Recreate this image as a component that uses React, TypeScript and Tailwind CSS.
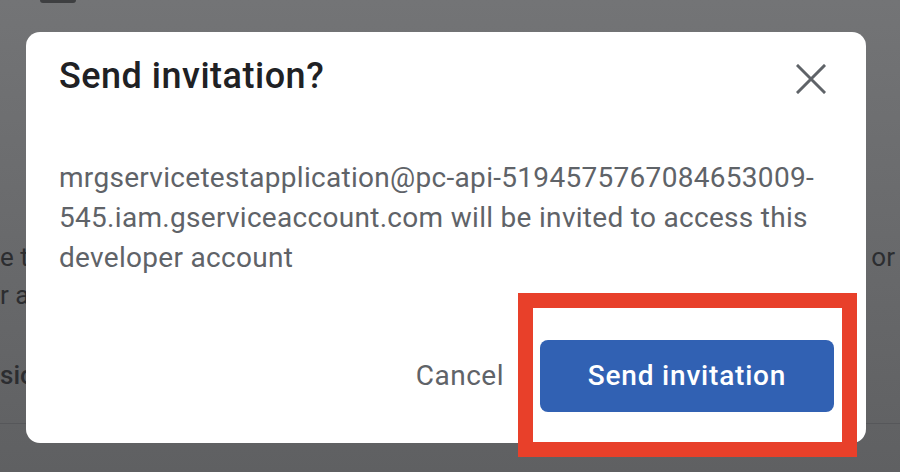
import React from 'react';

const font = { fontFamily: 'Roboto, "Noto Sans", Arial, sans-serif' };

export default function App() {
  return (
    <div
      className="relative w-[900px] h-[472px] overflow-hidden bg-gradient-to-b from-[#737476] to-[#5f6062]"
      style={font}
    >
      {/* page behind the modal */}
      <div className="flex flex-col h-full text-[26px] leading-[32px] text-[#2c2d30]">
        <div className="ml-[40px] w-[36px] h-[3px] rounded-b-[3px] bg-[#3e3f41]" />
        <div className="flex justify-between pt-[238px]">
          <span>e the</span>
          <span className="mr-[5px]">or</span>
        </div>
        <div className="mt-[6px]">r a</div>
        <div className="mt-[48px] font-medium">sion</div>
        <div className="mt-[32px] h-px bg-[#56575a]" />
      </div>

      {/* dialog */}
      <div className="absolute left-[26px] top-[32px] w-[840px] h-[411px] rounded-[14px] bg-white flex flex-col">
        <div className="flex items-start justify-between pl-[33px] pr-[40px] pt-[22px]">
          <h2 className="text-[36px] leading-[44px] font-medium tracking-[0.5px] text-[#202124]">Send invitation?</h2>
          <button className="mt-[10px] text-[#5f6368]">
            <svg width="30" height="30" viewBox="0 0 30 30">
              <path d="M2 2 L28 28 M28 2 L2 28" stroke="currentColor" strokeWidth="3" strokeLinecap="square" />
            </svg>
          </button>
        </div>
        <p className="pl-[33px] pr-[30px] mt-[60px] text-[28px] leading-[40px] tracking-[0.3px] text-[#5f6368] whitespace-nowrap">
          mrgservicetestapplication@pc-api-5194575767084653009-
          <br />
          545.iam.gserviceaccount.com will be invited to access this
          <br />
          developer account
        </p>
        <div className="mt-auto flex items-center justify-end gap-[36px] pr-[32px] pb-[31px]">
          <button className="text-[28px] tracking-[0.5px] text-[#5f6368]">Cancel</button>
          <button className="w-[294px] h-[72px] rounded-[8px] bg-[#3161b3] text-white text-[28px] tracking-[0.8px] font-medium">
            Send invitation
          </button>
        </div>
      </div>

      {/* annotation */}
      <div className="absolute left-[518px] top-[293px] w-[339px] h-[164px] border-[15px] border-[#e8402a]" />
    </div>
  );
}
